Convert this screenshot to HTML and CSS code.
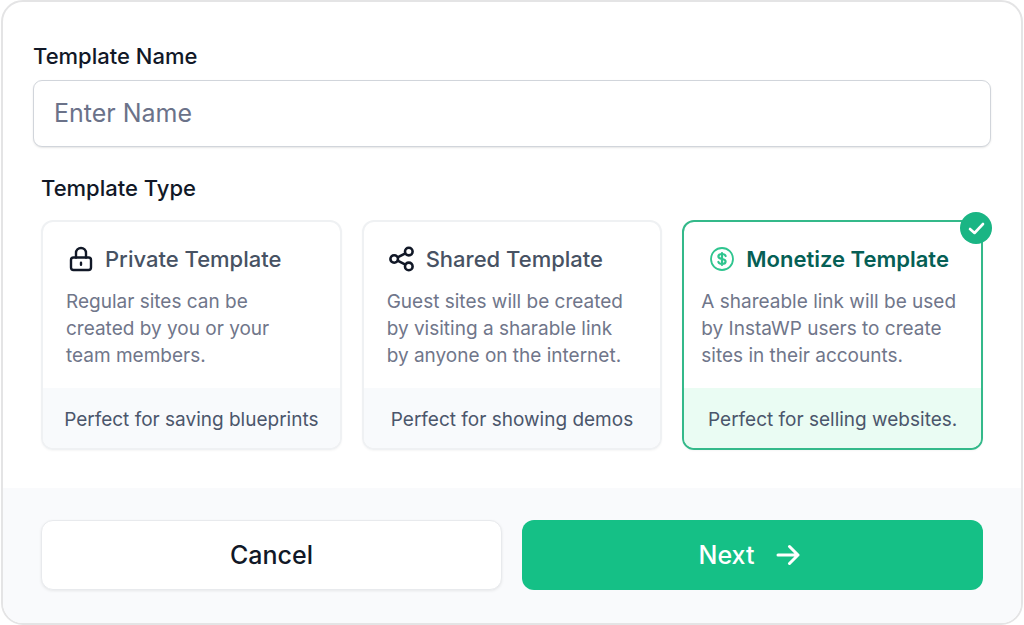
FILE: index.html
```
<!DOCTYPE html>
<html lang="en">
<head>
    <meta charset="UTF-8">
    <meta name="viewport" content="width=device-width, initial-scale=1.0">
    <title>Create Template</title>
    <link rel="stylesheet" href="styles.css">
</head>
<body>
    <form class="modal">
        <div class="modal-body">
            <label class="field-label" for="templateName">Template Name</label>
            <input type="text" class="text-input" id="templateName" placeholder="Enter Name">

            <fieldset class="types">
                <legend class="field-label">Template Type</legend>
                <div class="cards">
                    <label class="card">
                        <input type="radio" class="card-radio" name="type" value="private">
                        <span class="card-title">
                            <svg class="icon" viewBox="0 0 26 26" fill="none" stroke="currentColor" stroke-width="2.4" stroke-linecap="round" stroke-linejoin="round">
                                <rect x="3" y="11.5" width="20" height="12.5" rx="2.5"/>
                                <path d="M8 11.500V7a5 5 0 0 1 10 0v4.500M13 16.800v2"/>
                            </svg>
                            Private Template
                        </span>
                        <span class="card-text">Regular sites can be<br>created by you or your<br>team members.</span>
                        <span class="card-foot">Perfect for saving blueprints</span>
                    </label>

                    <label class="card">
                        <input type="radio" class="card-radio" name="type" value="shared">
                        <span class="card-title">
                            <svg class="icon" viewBox="0 0 26 26" fill="none" stroke="currentColor" stroke-width="2.6">
                                <circle cx="5.2" cy="13" r="3.8"/>
                                <circle cx="19.8" cy="5.6" r="3.8"/>
                                <circle cx="19.8" cy="20.4" r="3.8"/>
                                <path d="M8.6 11.3l7.8-4M8.6 14.7l7.8 4"/>
                            </svg>
                            Shared Template
                        </span>
                        <span class="card-text">Guest sites will be created<br>by visiting a sharable link<br>by anyone on the internet.</span>
                        <span class="card-foot">Perfect for showing demos</span>
                    </label>

                    <label class="card card-wide">
                        <input type="radio" class="card-radio" name="type" value="monetize" checked>
                        <span class="card-title">
                            <svg class="icon" viewBox="0 0 26 26" fill="none" stroke="currentColor" stroke-width="1.8" stroke-linecap="round" stroke-linejoin="round">
                                <circle cx="13" cy="13" r="11"/>
                                <path stroke-width="2.2" d="M16.6 10c-.4-1.2-1.7-2-3.6-2-2.1 0-3.6.9-3.6 2.5s1.5 2.1 3.6 2.5 3.6.9 3.6 2.5S15.1 18 13 18c-1.9 0-3.2-.8-3.6-2M13 7v12"/>
                            </svg>
                            Monetize Template
                        </span>
                        <span class="card-text">A shareable link will be used<br>by InstaWP users to create<br>sites in their accounts.</span>
                        <span class="card-foot">Perfect for selling websites.</span>
                        <span class="badge">
                            <svg viewBox="0 0 32 32" fill="none" stroke="currentColor" stroke-width="2.6" stroke-linecap="round" stroke-linejoin="round">
                                <path d="M10 17l4.500 4 8.500-9"/>
                            </svg>
                        </span>
                    </label>
                </div>
            </fieldset>
        </div>

        <div class="modal-footer">
            <button type="button" class="btn btn-cancel">Cancel</button>
            <button type="submit" class="btn btn-next">
                Next
                <svg class="arrow" viewBox="0 0 24 24" fill="none" stroke="currentColor" stroke-width="3" stroke-linecap="round" stroke-linejoin="round">
                    <path d="M2 12h20M13.500 3.500l8.500 8.500-8.500 8.500"/>
                </svg>
            </button>
        </div>
    </form>
</body>
</html>
```
FILE: styles.css
```
* {
    box-sizing: border-box;
}
body {
    margin: 0;
    padding: 0 1px;
    background: #fff;
    color: #111827;
    font-family: Inter, "Liberation Sans", sans-serif;
}
.modal {
    display: flex;
    flex-direction: column;
    min-height: 100vh;
    border: 2px solid #e4e4e5;
    border-radius: 22px;
    overflow: hidden;
}
.modal-body {
    flex-grow: 1;
    padding: 40px 30px 38px;
}
.field-label {
    display: block;
    padding: 0;
    font-size: 22px;
    font-weight: 500;
    line-height: 28px;
}
.text-input {
    display: block;
    width: 100%;
    height: 67px;
    margin-top: 10px;
    padding: 0 20px 2px;
    border: 1px solid #d1d5db;
    border-radius: 9px;
    box-shadow: 0 1px 2px rgba(0, 0, 0, 0.1);
    background: #fff;
    color: #111827;
    font-family: inherit;
    font-size: 25px;
}
.text-input::placeholder {
    color: #6b7289;
    opacity: 1;
}
.types {
    margin: 27px 0 0;
    padding: 0 8px;
    border: none;
}
.cards {
    display: grid;
    grid-template-columns: repeat(3, 1fr);
    gap: 20px;
    margin-top: 18px;
}
.card {
    position: relative;
    display: flex;
    flex-direction: column;
    border: 2px solid #eff1f3;
    border-radius: 12px;
    box-shadow: 0 1px 2px rgba(0, 0, 0, 0.04);
    cursor: pointer;
}
.card-radio {
    position: absolute;
    opacity: 0;
}
.card-title {
    display: flex;
    align-items: center;
    gap: 11px;
    padding: 21px 0 0 25px;
    color: #475263;
    font-size: 22px;
    font-weight: 500;
    line-height: 32px;
    white-space: nowrap;
}
.icon {
    width: 26px;
    height: 26px;
    flex-shrink: 0;
    color: #111827;
}
.card-text {
    padding: 13px 0 19px 23px;
    color: #70768a;
    font-size: 19px;
    line-height: 27px;
    white-space: nowrap;
}
.card-wide .card-text {
    padding-left: 17px;
}
.card-foot {
    padding: 18px 0 14px;
    border-radius: 0 0 10px 10px;
    background: #f8fafc;
    color: #4b566b;
    font-size: 19px;
    line-height: 28px;
    text-align: center;
    white-space: nowrap;
}

/* selected card */
.card:has(.card-radio:checked) {
    border-color: #34b98a;
}
.card-radio:checked ~ .card-title {
    color: #065f55;
    font-weight: 600;
}
.card-radio:checked ~ .card-title .icon {
    color: #2fc58f;
}
.card-radio:checked ~ .card-foot {
    background: #eafcf3;
}
.badge {
    position: absolute;
    top: -10px;
    right: -11px;
    width: 32px;
    height: 32px;
    border-radius: 50%;
    background: #1ab584;
    color: #fff;
}
.badge svg {
    display: block;
}

.modal-footer {
    display: grid;
    grid-template-columns: 1fr 1fr;
    gap: 20px;
    padding: 32px 38px 33px;
    background: #f9fafc;
}
.btn {
    display: flex;
    align-items: center;
    justify-content: center;
    gap: 22px;
    height: 70px;
    border: none;
    border-radius: 12px;
    font-family: inherit;
    font-size: 25px;
    font-weight: 500;
    cursor: pointer;
}
.btn-cancel {
    border: 1px solid #e8eaed;
    box-shadow: 0 1px 3px rgba(0, 0, 0, 0.08);
    background: #fff;
    color: #111827;
}
.btn-next {
    padding-right: 12px;
    background: #15c086;
    color: #fff;
}
.arrow {
    width: 24px;
    height: 24px;
}
```
